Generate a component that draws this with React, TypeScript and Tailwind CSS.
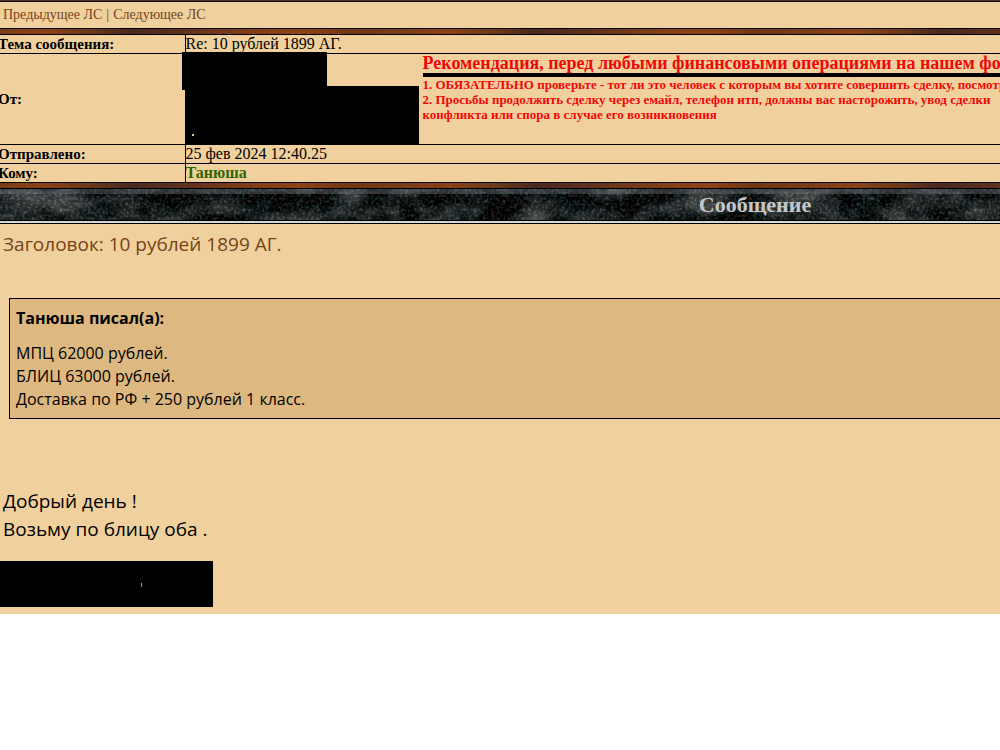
import React from 'react';

const serif = "font-['Liberation_Serif',serif]";

const StoneTexture = () => (
  <svg className="absolute inset-0 h-full w-full" aria-hidden="true">
    <defs>
      <filter id="stone" x="0" y="0" width="100%" height="100%" colorInterpolationFilters="sRGB">
        <feTurbulence type="fractalNoise" baseFrequency="0.025 0.04" numOctaves="3" seed="8" />
        <feColorMatrix values="0.6 0.2 0 0 -0.33  0.55 0.2 0 0 -0.28  0.55 0.22 0 0 -0.29  0 0 0 0 1" result="patches" />
        <feTurbulence type="fractalNoise" baseFrequency="0.35" numOctaves="2" seed="3" />
        <feColorMatrix values="0.5 0 0 0 -0.22  0.5 0 0 0 -0.22  0.5 0 0 0 -0.22  0 0 0 0 1" result="grain" />
        <feComposite in="patches" in2="grain" operator="arithmetic" k2="1" k3="1" />
      </filter>
    </defs>
    <rect width="100%" height="100%" fill="#172020" />
    <rect width="100%" height="100%" filter="url(#stone)" />
    <rect width="100%" height="5" fill="#808890" fillOpacity="0.35" />
  </svg>
);

const WoodStrip = ({ className }: { className: string }) => (
  <div
    className={`border-b border-black bg-[repeating-linear-gradient(92deg,#7c3c18,#8a4217_45px,#6b3919_90px,#49291f_130px,#5c301c_180px,#7c3c18_240px,#8f4314_300px,#713615_350px,#7c3c18_405px)] ${className}`}
  />
);

const Row = ({ label, children }: { label: string; children: React.ReactNode }) => (
  <tr className="border-b border-black">
    <th scope="row" className="w-[185px] border-r border-black p-0 text-left text-[15px] font-bold">
      <span className="-ml-0.5">{label}</span>
    </th>
    <td className="relative p-0 align-top">{children}</td>
  </tr>
);

const Warning = () => (
  <div className="ml-[237px] whitespace-nowrap font-bold text-[#f00808]">
    <p className="border-b-4 border-black text-[18px] leading-[19px]">
      Рекомендация, перед любыми финансовыми операциями на нашем форуме
    </p>
    <p className="text-[13px] leading-[15px]">
      1. ОБЯЗАТЕЛЬНО проверьте - тот ли это человек с которым вы хотите совершить сделку, посмотрите
      <br />
      2. Просьбы продолжить сделку через емайл, телефон итп, должны вас насторожить, увод сделки
      <br />
      конфликта или спора в случае его возникновения
    </p>
  </div>
);

export default function App() {
  return (
    <div className="min-h-screen overflow-x-hidden bg-white">
      {/* the message table is wider than the window */}
      <main className={`w-[151%] bg-[#f0d19e] text-black ${serif}`}>
        <div className="h-0.5 border-b border-black bg-[#5a321c]" />
        <nav className="flex h-[26px] items-center gap-1 px-[3px] pb-0.5 text-[14px] text-[#754319]">
          <a href="#prev">Предыдущее ЛС</a>
          <span>|</span>
          <a href="#next">Следующее ЛС</a>
        </nav>
        <WoodStrip className="h-[7px] border-t" />

        <table className="w-full border-collapse text-[16px] leading-[18px]">
          <tbody>
            <Row label="Тема сообщения:">Re: 10 рублей 1899 АГ.</Row>
            <Row label="От:">
              <div className="h-[90px]">
                <div className="absolute -left-1 -top-0.5 h-[38px] w-[145px] bg-black" />
                <div className="absolute bottom-0 left-0 h-[58px] w-[233px] bg-black">
                  <span className="absolute bottom-2 left-1.5 h-0.5 w-0.5 bg-[#d9c79c]" />
                </div>
                <Warning />
              </div>
            </Row>
            <Row label="Отправлено:">25 фев 2024 12:40.25</Row>
            <Row label="Кому:">
              <a href="#profile" className="font-bold text-[#356500]">Танюша</a>
            </Row>
          </tbody>
        </table>
        <WoodStrip className="h-[6px]" />

        <header className="relative h-[31px] overflow-hidden bg-[#172020]">
          <StoneTexture />
          <h1 className="relative text-center text-[22px] font-bold leading-[31px] text-[#c4c8cc]">Сообщение</h1>
        </header>
        <div className="h-1 border-y border-black bg-[#d5d8d8]" />

        <article className="px-[3px] pb-[7px] font-['Open_Sans',sans-serif]">
          <h2 className="pt-1.5 text-[19px] leading-7 text-[#754319]">Заголовок: 10 рублей 1899 АГ.</h2>
          <blockquote className="mx-1.5 mt-10 border border-black bg-[#ddb981] px-1.5 pb-[7px] pt-2 text-[16px] leading-[23px]">
            <p className="mb-3 font-bold">Танюша писал(а):</p>
            <p>МПЦ 62000 рублей.</p>
            <p>БЛИЦ 63000 рублей.</p>
            <p>Доставка по РФ + 250 рублей 1 класс.</p>
          </blockquote>
          <p className="mt-[68px] text-[19px] leading-7">
            Добрый день !
            <br />
            Возьму по блицу оба .
          </p>
          <div className="relative -ml-[3px] mt-[18px] h-[46px] w-[213px] bg-black">
            <span className="absolute left-[141px] top-[22px] h-1 w-px bg-[#b9a17a]" />
          </div>
        </article>
      </main>
    </div>
  );
}
